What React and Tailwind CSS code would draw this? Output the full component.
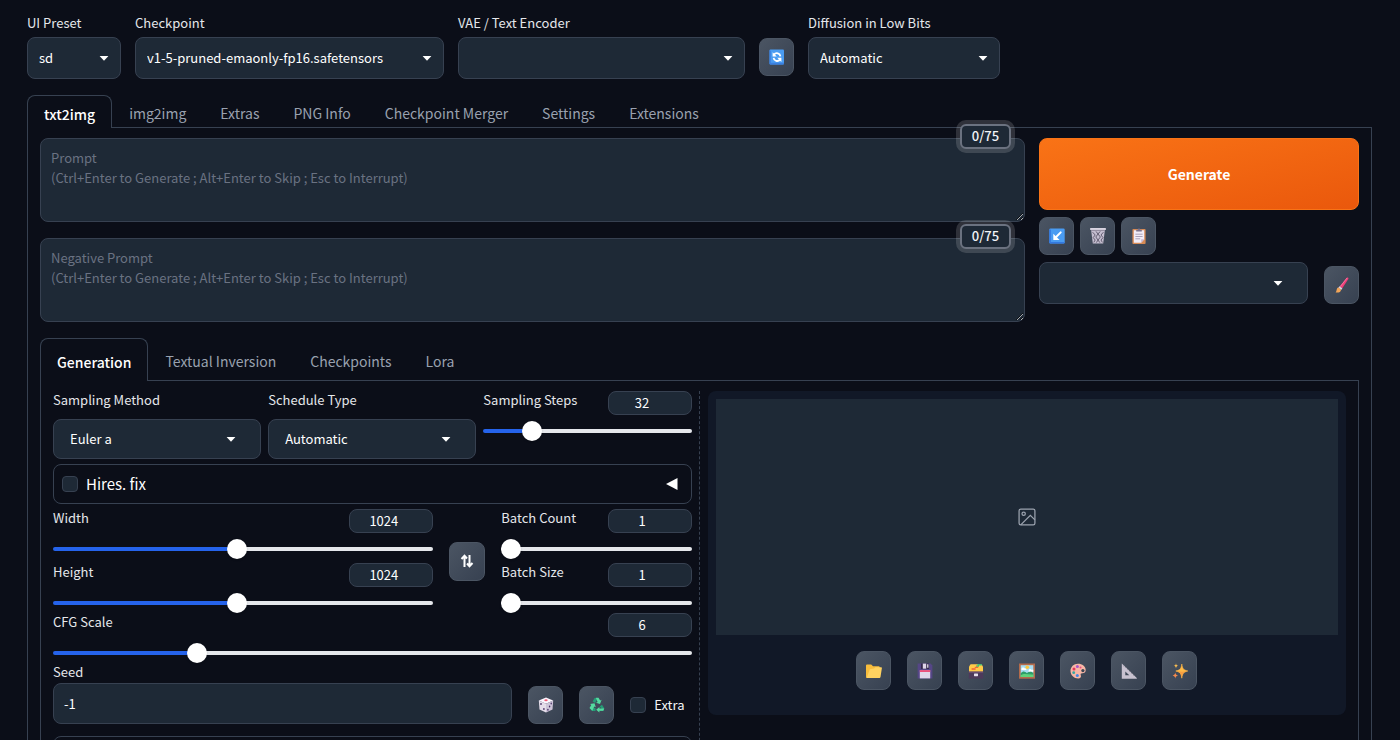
import React, { useState } from 'react';

const Caret = ({ className }) => (
    <svg viewBox="0 0 18 18" className={`pointer-events-none absolute top-1/2 size-[18px] -translate-y-1/2 fill-white ${className}`}>
        <path d="M4.6 7h8.8L9 11.8z" />
    </svg>
);

const icons = {
    refresh: (
        <>
            <rect x="0.5" y="0.5" width="14.500" height="15" rx="1" fill="#4a9cf2" />
            <path d="M.5 1.500h1.300v12.300H15v.7a1 1 0 0 1-1 1H1.500a1 1 0 0 1-1-1z" fill="#3b7fe0" />
            <path d="M5 5.600a3.600 3.600 0 0 1 6.400 1.800M11 10.600a3.600 3.600 0 0 1-6.400-1.800" fill="none" stroke="#fff" strokeWidth="1.8" />
            <path d="M3.600 3.200v4.300h4.200zM12.400 13V8.700H8.200z" fill="#fff" />
        </>
    ),
    arrow: (
        <>
            <rect x="0.3" y="0.5" width="15.4" height="15" rx="1.2" fill="#4a9cf2" />
            <path d="M0.3 1.5h1.5v12.5h13.9v.5a1 1 0 0 1-1 1H1.3a1 1 0 0 1-1-1z" fill="#3478e0" />
            <path d="M11.7 4.4 6.4 9.7" stroke="#fff" strokeWidth="2" strokeLinecap="round" />
            <path d="M4.3 5.8v6.3h6.3z" fill="#fff" />
        </>
    ),
    trash: (
        <>
            <path d="M1 1.2h14L13.2 15.6H2.8z" fill="#c4bdcf" />
            <path d="M2.6 4.2 5.2 7 3.2 9.6l2 2.4-1.4 2.4M6 3.4 8 6l-2.2 3L8 12l-1.6 2.6M10.2 3.4 8 6l2.4 3L8 12l1.8 2.6M13.4 4.2 11 7l2 2.6-2 2.4 1.4 2.4" stroke="#655f73" strokeWidth="1" fill="none" />
            <rect x="0" y="0" width="16" height="2" rx=".8" fill="#d8d3df" />
            <path d="M1.2 2.4h13.6" stroke="#7c758a" strokeWidth=".7" />
        </>
    ),
    clipboard: (
        <>
            <rect x="1.4" y="1" width="13.2" height="15" rx="1" fill="#d88b55" />
            <path d="M2.8 2.2h10.4v9l-3 3.5H2.8z" fill="#f2edf7" />
            <path d="M13.2 11.2h-3v3.5z" fill="#c8b9d6" />
            <path d="M4.4 6.2h7.2M4.4 8.5h7.2M4.4 10.8h4.8" stroke="#aaa1ba" />
            <path d="M5.2 3.6V1.8h1.6a1.2 1.2 0 0 1 2.4 0h1.6v1.8z" fill="#7d748d" />
        </>
    ),
    brush: (
        <>
            <path d="M12.8.8c.9-.8 2 .1 1.5 1.2L8.3 11.2 5.6 9.4z" fill="#ef3f79" />
            <path d="M13 1 6.3 9.6" stroke="#fb7da5" strokeWidth=".8" />
            <path d="m5.4 9.2 3 2-1.2 1.7-2.9-2.1z" fill="#d7d2de" />
            <path d="M4.3 10.4 7 12.5c.2 2.6-2.8 3.6-5.4 2.9 1.4-1 .6-4.6 2.7-5z" fill="#f2a558" />
        </>
    ),
    dice: (
        <>
            <path d="M8 .6 15.2 3.4 8 6.7.8 3.4z" fill="#fbf6ff" />
            <path d="M.8 3.4 8 6.7v8.9L1.5 12.5z" fill="#e5ddea" />
            <path d="M15.2 3.4 8 6.7v8.9l6.5-3.1z" fill="#cdc4d8" />
            <ellipse cx="8" cy="3.2" rx="1.7" ry="1" fill="#ef5874" />
            <g fill="#432b62">
                <ellipse cx="3" cy="7" rx=".8" ry="1" />
                <ellipse cx="5.9" cy="12" rx=".8" ry="1" />
                <ellipse cx="13.2" cy="6.5" rx=".7" ry="1" />
                <ellipse cx="11.6" cy="9.6" rx=".7" ry="1" />
                <ellipse cx="9.9" cy="12.7" rx=".7" ry="1" />
            </g>
        </>
    ),
    recycle: (
        <>
            <path d="m3.6 4.4 2-3.3h3.2L6.2 6z" fill="#259c76" />
            <path d="M6.8.8h2.7l1.7 2.7 1.4-.7-1.6 4.3-4-1.4 1.6-.8z" fill="#55dba0" />
            <path d="m13 7.8 2.4 3.8-1.3 2.5h-3.4l2-2.3-2-2.4z" fill="#259c76" />
            <path d="M14.4 13.8h-4v1.8L7.2 12.7 10.4 9.9v1.5h4.7z" fill="#55dba0" />
            <path d="M6.5 14.1H3L.8 10.9h5.7z" fill="#259c76" />
            <path d="m.5 11 1.8-3.1L1 7.1l4.5-.8 1.3 4-1.5-.7-2 4.2z" fill="#55dba0" />
        </>
    ),
    folder: (
        <>
            <path d="M0 2.500a1 1 0 0 1 1-1h4.200L7 3.200h5.700a1 1 0 0 1 1 1V15H1a1 1 0 0 1-1-1z" fill="#f8bd3c" />
            <path d="M3.800 6.200 8 5.500l1.500-1.300h5.600a.8.8 0 0 1 .8.9L14.500 14a1.300 1.300 0 0 1-1.300 1H.6z" fill="#ffd260" />
        </>
    ),
    floppy: (
        <>
            <path d="M.6.6h12.9l1.9 1.9v12.9H.6z" fill="#554686" />
            <path d="M4 .6h8v5.3H4z" fill="#322849" />
            <path d="M5.8.6h3.4v5.1H5.8z" fill="#ddd4e7" />
            <path d="M10.2 1.3h1.2v3.5h-1.2z" fill="#f2eef7" />
            <path d="M2.8 7.2h10.4v8.2H2.8z" fill="#dfd7e9" />
            <path d="M2.8 7.2h10.4v1.7H2.8z" fill="#ee426e" />
        </>
    ),
    cardbox: (
        <>
            <path d="M1 3.500 2.600 1.300h10.800L15 3.500v5.800H1z" fill="#ffcb48" />
            <path d="M8 2.600h1.500V1h4.300v1.500H11v1.300H8z" fill="#43bd73" />
            <path d="M3.600 5.200h4v1.600h-4z" fill="#f0673b" />
            <path d="M6.800 3.800h3.400v1.200H6.800z" fill="#f0673b" />
            <path d="M.8 8.600h14.400v7H.8z" fill="#4d3a5b" />
            <path d="M.8 8.600h14.400v1.300H.8z" fill="#6a4f74" />
            <rect x="6" y="10.500" width="4" height="2.700" rx=".4" fill="#e6deee" />
        </>
    ),
    frame: (
        <>
            <path d="M0 .5h16v15.2H0z" fill="#b46b4b" />
            <path d="M1.7 2.2h12.6v11.8H1.7z" fill="#a8def3" />
            <path d="M2.5 5.6c.7-1.8 2.8-1.2 3-.3 1-.5 2.4.5 1.7 1.8H2.5zM9.7 7c.3-1.2 2-1.4 2.6-.3h2v2H9.7z" fill="#fff" />
            <circle cx="8.300" cy="4.200" r="1.800" fill="#ffc83d" />
            <path d="M1.7 10.3c2.7-3 4.4-1.5 6.2-.2 2-1.4 4.3-2.1 6.4 0V14H1.7z" fill="#2e9e68" />
            <path d="M1.7 12.3c3.4-2.6 7.5-.5 12.6-.9V14H1.7z" fill="#5fd27c" />
        </>
    ),
    palette: (
        <>
            <path d="M8 .7c4.2 0 7.7 2.5 7.7 6.4 0 2.2-1.6 3.3-3.4 3.2-1.5-.1-2 .7-1.5 2 .7 1.9-.4 3.2-2.5 3.2C4 15.5.5 12.2.5 8 .5 3.8 3.7.7 8 .7z" fill="#f8b7a6" />
            <circle cx="12.9" cy="7.6" r="1.6" fill="#3c4553" />
            <circle cx="7.4" cy="3.6" r="1.5" fill="#a955c7" />
            <circle cx="10.5" cy="4.6" r="1" fill="#ea4c80" />
            <circle cx="4" cy="6" r="1.5" fill="#e3375c" />
            <circle cx="3.7" cy="9.7" r="1.4" fill="#38a9a0" />
            <circle cx="7.3" cy="12.4" r="1.5" fill="#4186e5" />
        </>
    ),
    ruler: (
        <>
            <path fillRule="evenodd" d="M.8.4 15.8 15v.7H.8zM4.3 8.4v3.9h4z" fill="#c8c2d0" />
            <path d="m2.5 3 1-.8M4.5 5l1-1M6.5 7l1-1M8.5 9l1-1M10.5 11l1-1M12.5 13l1-1" stroke="#77727f" strokeWidth=".7" />
        </>
    ),
    sparkles: (
        <>
            <path d="M9.8 1c.8 5 1.400 5.800 6 7-4.600 1.300-5.200 2.200-6 7.200-.8-5-1.400-5.900-6-7.200 4.600-1.200 5.200-2 6-7z" fill="#ffb946" stroke="#ffb946" strokeWidth=".6" strokeLinejoin="round" />
            <path d="M3.800 8c3.600.8 8 1 12 0-4.600 1.300-5.200 2.200-6 7.200-.8-5-1.400-5.900-6-7.200z" fill="#f79e42" />
            <path d="M4 .2c.3 1.9.7 2.200 2.300 2.600C4.700 3.200 4.300 3.600 4 5.500 3.700 3.600 3.300 3.200 1.700 2.800 3.300 2.400 3.700 2.100 4 .2z" fill="#ffc052" />
            <path d="M3.300 9.500c.4 2.100.8 2.500 2.700 3-1.900.5-2.300.9-2.700 3-.4-2.100-.8-2.500-2.700-3 1.900-.5 2.300-.9 2.700-3z" fill="#f58a4e" />
        </>
    )
};

const ToolButton = ({ icon, title, tall }) => (
    <button
        title={title}
        aria-label={title}
        className={`flex w-[35px] shrink-0 items-center justify-center rounded-lg border border-[#4b5563] bg-linear-to-br from-[#4b5563] to-[#374151] ${tall ? 'h-[39px]' : 'h-[38px]'}`}
    >
        <svg viewBox="0 0 16 16" className="size-4">{icons[icon]}</svg>
    </button>
);

const Dropdown = ({ id, label, hideLabel, options, className = '', wide }) => (
    <div className={className}>
        {!hideLabel && <label htmlFor={id} className="block text-[13px] leading-[18px] whitespace-nowrap text-gray-200">{label}</label>}
        <div className={`relative ${hideLabel ? '' : wide ? 'mt-2.5' : 'mt-[5px]'}`}>
            <select
                id={id}
                aria-label={label}
                className={`block w-full appearance-none rounded-lg border border-[#374151] bg-[#1e2936] text-[13px] text-white ${wide ? 'h-10 px-4' : 'h-[42px] px-[11px]'}`}
            >
                {options.map((o) => <option key={o}>{o}</option>)}
            </select>
            <Caret className={wide || hideLabel ? 'right-[21px]' : 'right-2'} />
        </div>
    </div>
);

const Slider = ({ id, label, min, max, initial }) => {
    const [value, setValue] = useState(initial);
    const fill = `${((value - min) / (max - min)) * 100}%`;

    return (
        <div>
            <div className="flex items-start justify-between">
                <label htmlFor={id} className="text-[13px] leading-[18px] text-gray-200">{label}</label>
                <input
                    type="number"
                    aria-label={`${label} value`}
                    value={value}
                    min={min}
                    max={max}
                    onChange={(e) => setValue(e.target.value)}
                    className="h-6 w-[84px] rounded-lg border border-[#374151] bg-[#1e2936] px-2 pb-0.5 text-center text-[13px] leading-5 text-white"
                />
            </div>
            <input
                id={id}
                type="range"
                value={value}
                min={min}
                max={max}
                onChange={(e) => setValue(e.target.value)}
                style={{ '--fill': fill }}
                className="mt-1.5 block h-5 w-full appearance-none bg-transparent [&::-webkit-slider-runnable-track]:h-1 [&::-webkit-slider-runnable-track]:rounded-full [&::-webkit-slider-runnable-track]:bg-[linear-gradient(to_right,#2563eb_var(--fill),#e5e7eb_var(--fill))] [&::-webkit-slider-thumb]:-mt-2 [&::-webkit-slider-thumb]:size-5 [&::-webkit-slider-thumb]:appearance-none [&::-webkit-slider-thumb]:rounded-full [&::-webkit-slider-thumb]:bg-white [&::-webkit-slider-thumb]:shadow"
            />
        </div>
    );
};

const Tabs = ({ items, tall }) => {
    const [active, setActive] = useState(items[0]);

    return (
        <div role="tablist" className="flex">
            {items.map((item) => (
                <button
                    key={item}
                    role="tab"
                    aria-selected={item === active}
                    onClick={() => setActive(item)}
                    className={`pt-[3px] text-sm whitespace-nowrap ${tall ? 'h-[43px]' : 'h-[33px]'} ${item === active
                        ? 'rounded-t-lg border-x border-t border-[#374151] px-4 font-medium text-white'
                        : 'border-b border-[#374151] px-[17px] text-gray-400'}`}
                >
                    {item}
                </button>
            ))}
            <div className="flex-1 border-b border-[#374151]" />
        </div>
    );
};

const PromptBox = ({ label }) => (
    <div className="relative">
        <textarea
            aria-label={label}
            placeholder={`${label}\n(Ctrl+Enter to Generate ; Alt+Enter to Skip ; Esc to Interrupt)`}
            className="block h-[84px] w-full rounded-lg border border-[#374151] bg-[#1e2936] px-2.5 py-[9px] text-[13px] leading-5 text-white placeholder:text-gray-500"
        />
        <span className="absolute -top-3.5 right-3.5 flex h-[25px] w-[51px] items-center justify-center rounded-md border-2 border-[#6b7280] bg-[#1e2936] pb-0.5 text-[13px] leading-5 font-medium text-gray-100 ring-4 ring-white/15">
            0/75
        </span>
    </div>
);

const Checkbox = ({ id }) => (
    <input id={id} type="checkbox" className="size-4 appearance-none rounded-sm border border-[#374151] bg-[#1e2936] checked:bg-blue-600" />
);

const galleryTools = [
    ['folder', 'Open images output directory'],
    ['floppy', 'Save the image'],
    ['cardbox', 'Save zip archive'],
    ['frame', 'Send to img2img'],
    ['palette', 'Send to inpaint'],
    ['ruler', 'Send to extras'],
    ['sparkles', 'Upscale']
];

const GenerationSettings = () => (
    <div className="min-w-0 flex-1">
        <div className="grid grid-cols-3 gap-[7px]">
            <Dropdown id="sampler" label="Sampling Method" options={['Euler a', 'Euler', 'DPM++ 2M']} wide />
            <Dropdown id="scheduler" label="Schedule Type" options={['Automatic', 'Karras']} wide />
            <Slider id="steps" label="Sampling Steps" min={1} max={150} initial={32} />
        </div>

        <div className="mt-[5px] flex h-10 items-center justify-between rounded-lg border border-[#374151] pr-3 pl-2">
            <div className="flex items-center gap-2">
                <Checkbox id="hires" />
                <label htmlFor="hires" className="text-[15px] leading-5 text-white">Hires. fix</label>
            </div>
            <button aria-label="Expand Hires. fix">
                <svg viewBox="0 0 14 12" className="h-3 w-3.5 fill-white"><path d="M12.500 0v12L1 6z" /></svg>
            </button>
        </div>

        <div className="mt-[5px] flex items-center gap-4">
            <div className="flex min-w-0 flex-[2] flex-col gap-1">
                <Slider id="width" label="Width" min={64} max={2048} initial={1024} />
                <Slider id="height" label="Height" min={64} max={2048} initial={1024} />
            </div>
            <button
                aria-label="Switch width and height"
                className="flex h-[39px] w-9 items-center justify-center rounded-lg border border-[#4b5563] bg-linear-to-br from-[#4b5563] to-[#374151]"
            >
                <svg viewBox="0 0 14 14" className="size-3.5 fill-none stroke-white stroke-2">
                    <path d="M4.500 13V2M1.500 5l3-3.200L7 4.500M9.500 1v11M7 9.500l2.500 2.700 3-3.200" />
                </svg>
            </button>
            <div className="flex min-w-0 flex-1 flex-col gap-1">
                <Slider id="batch-count" label="Batch Count" min={1} max={100} initial={1} />
                <Slider id="batch-size" label="Batch Size" min={1} max={8} initial={1} />
            </div>
        </div>

        <Slider id="cfg" label="CFG Scale" min={1} max={24} initial={6} />

        <div className="flex items-end gap-4">
            <div className="min-w-0 flex-1">
                <label htmlFor="seed" className="block text-[13px] leading-[18px] text-gray-200">Seed</label>
                <input
                    id="seed"
                    type="text"
                    defaultValue="-1"
                    className="mt-0.5 block h-[41px] w-full rounded-lg border border-[#374151] bg-[#1e2936] px-2.5 text-[13px] text-white"
                />
            </div>
            <ToolButton icon="dice" title="Random seed" />
            <ToolButton icon="recycle" title="Reuse seed" />
            <div className="flex h-[38px] items-center gap-2 pr-[7px]">
                <Checkbox id="extra" />
                <label htmlFor="extra" className="text-[13px] leading-5 text-gray-100">Extra</label>
            </div>
        </div>

        <div className="mt-3 h-10 rounded-lg border border-[#374151]" />
    </div>
);

const Gallery = () => (
    <div className="min-w-0 flex-1">
        <div className="rounded-lg bg-[#111827] p-2 pb-[25px]">
            <div className="flex h-[236px] items-center justify-center bg-[#1e2936]">
                <svg viewBox="0 0 24 24" className="size-5 fill-none stroke-[#9ca3af] stroke-[1.5]">
                    <rect x="2.500" y="2.500" width="19" height="19" rx="2" />
                    <circle cx="8" cy="8" r="2" />
                    <path d="M21.500 15.500 16 10 4.500 21.500" />
                </svg>
            </div>
            <div className="mt-4 flex justify-center gap-4">
                {galleryTools.map(([icon, title]) => <ToolButton key={icon} icon={icon} title={title} tall />)}
            </div>
        </div>
    </div>
);

const App = () => {
    return (
        <div className="h-screen overflow-hidden bg-[#0b0e18] pt-3.5 pr-7 pl-[27px] font-['Noto_Sans_CJK_SC',sans-serif] text-white">
            <div className="flex items-end gap-3.5">
                <Dropdown id="preset" label="UI Preset" options={['sd', 'xl', 'flux', 'all']} className="w-[94px]" />
                <Dropdown id="checkpoint" label="Checkpoint" options={['v1-5-pruned-emaonly-fp16.safetensors']} className="w-[309px]" />
                <Dropdown id="vae" label="VAE / Text Encoder" options={['']} className="w-[287px]" />
                <div className="pb-[3px]"><ToolButton icon="refresh" title="Refresh" /></div>
                <Dropdown id="low-bits" label="Diffusion in Low Bits" options={['Automatic', 'float8-e4m3fn']} className="w-48" />
            </div>

            <div className="mt-4">
                <Tabs items={['txt2img', 'img2img', 'Extras', 'PNG Info', 'Checkpoint Merger', 'Settings', 'Extensions']} />
            </div>
            <div className="border-x border-[#374151] px-3 pt-2.5">
                <div className="flex gap-3.5">
                    <div className="flex min-w-0 flex-1 flex-col gap-4">
                        <PromptBox label="Prompt" />
                        <PromptBox label="Negative Prompt" />
                    </div>
                    <div className="flex w-80 flex-col gap-[7px]">
                        <button className="h-[72px] rounded-lg border border-[#f97316] bg-linear-to-br from-[#f97316] to-[#ea580c] text-sm font-bold text-white">
                            Generate
                        </button>
                        <div className="flex gap-1.5">
                            <ToolButton icon="arrow" title="Read generation parameters" />
                            <ToolButton icon="trash" title="Clear prompt" />
                            <ToolButton icon="clipboard" title="Apply styles" />
                        </div>
                        <div className="flex items-end gap-4">
                            <Dropdown id="styles" label="Styles" hideLabel options={['']} className="min-w-0 flex-1" />
                            <ToolButton icon="brush" title="Edit styles" />
                        </div>
                    </div>
                </div>

                <div className="mt-4">
                    <Tabs tall items={['Generation', 'Textual Inversion', 'Checkpoints', 'Lora']} />
                </div>
                <div className="flex border-x border-[#374151] px-3 pt-2.5">
                    <GenerationSettings />
                    <div className="flex w-4 justify-center">
                        <div className="border-l border-dashed border-[#374151]" />
                    </div>
                    <Gallery />
                </div>
            </div>
        </div>
    );
};

export default App;
